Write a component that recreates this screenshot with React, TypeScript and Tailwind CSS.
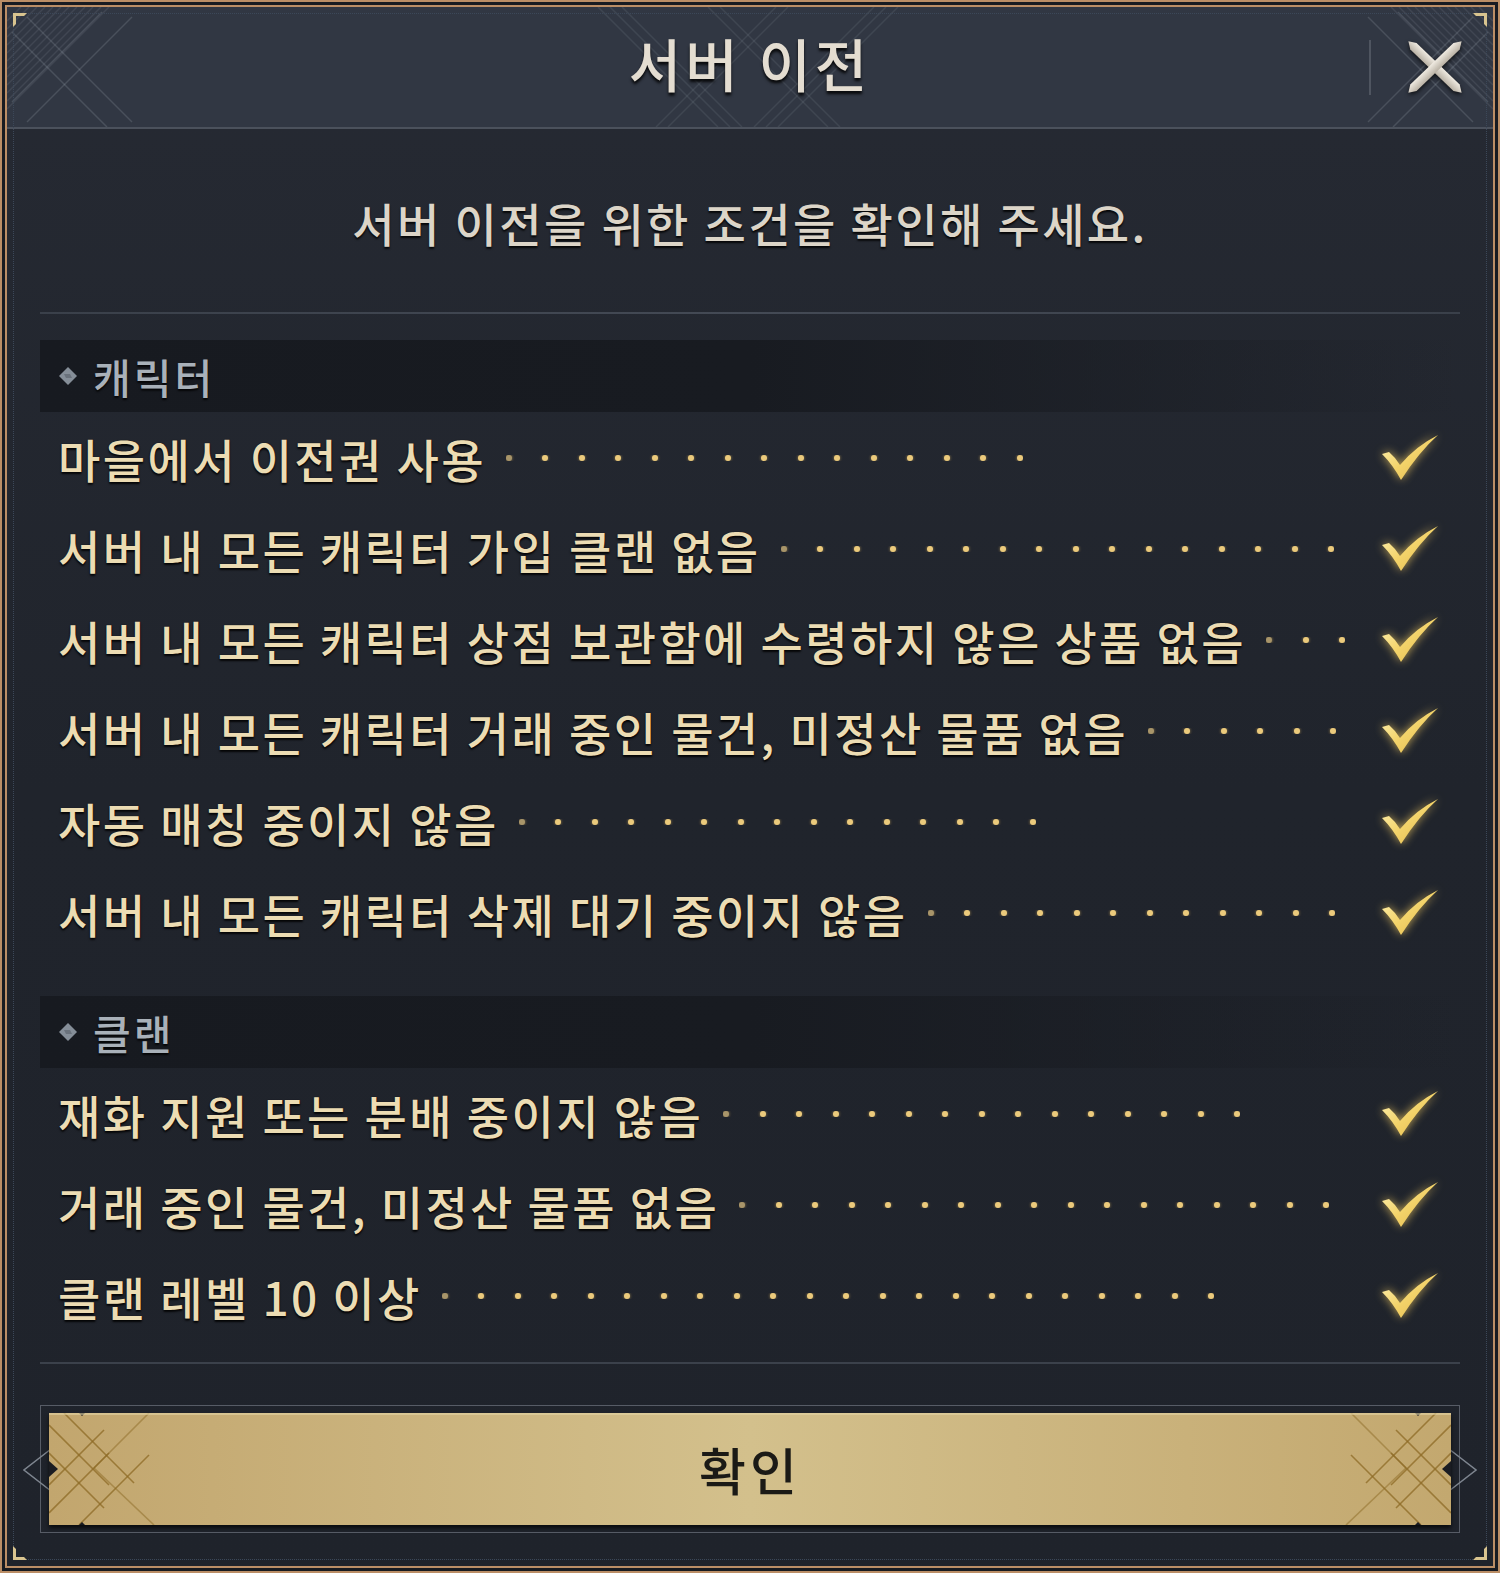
import React from "react";

type Row = { text: string; dots: number };

const charRows: Row[] = [
  { text: "마을에서 이전권 사용", dots: 15 },
  { text: "서버 내 모든 캐릭터 가입 클랜 없음", dots: 16 },
  { text: "서버 내 모든 캐릭터 상점 보관함에 수령하지 않은 상품 없음", dots: 3 },
  { text: "서버 내 모든 캐릭터 거래 중인 물건, 미정산 물품 없음", dots: 6 },
  { text: "자동 매칭 중이지 않음", dots: 15 },
  { text: "서버 내 모든 캐릭터 삭제 대기 중이지 않음", dots: 12 },
];

const clanRows: Row[] = [
  { text: "재화 지원 또는 분배 중이지 않음", dots: 15 },
  { text: "거래 중인 물건, 미정산 물품 없음", dots: 17 },
  { text: "클랜 레벨 10 이상", dots: 22 },
];

const font = { fontFamily: '"Noto Sans CJK KR", "Noto Sans", sans-serif' };

function Check() {
  return (
    <svg width="56" height="45" viewBox="0 0 56 45" className="drop-shadow-[0_0_5px_rgba(255,214,100,0.75)]">
      <defs>
        <linearGradient id="chk" x1="0" y1="0" x2="1" y2="1">
          <stop offset="0" stopColor="#fff4b8" />
          <stop offset="0.5" stopColor="#f3d36a" />
          <stop offset="1" stopColor="#e2b84c" />
        </linearGradient>
      </defs>
      <path d="M0 19 L7 17 Q13 22 18 30 Q34 11 56 0 Q37 17 19 45 Q11 30 0 19 Z" fill="url(#chk)" />
    </svg>
  );
}

function Diamond() {
  return (
    <svg width="20" height="20" viewBox="0 0 20 20">
      <path d="M10 1 L19 10 L10 19 L1 10 Z" fill="#858e98" />
      <path d="M6 8 L12 8 L14 12 L8 12 Z" fill="#6a727c" />
    </svg>
  );
}

function CloseIcon() {
  const blade = "M-37 0 L-30 -4.5 L30 -4.5 L37 0 L30 4.5 L-30 4.5 Z";
  return (
    <svg width="56" height="54" viewBox="0 0 56 54" className="drop-shadow-[0_2px_2px_rgba(0,0,0,0.7)]">
      <defs>
        <linearGradient id="bl" x1="0" y1="0" x2="0" y2="1">
          <stop offset="0" stopColor="#f0ebe2" />
          <stop offset="1" stopColor="#b9b1a4" />
        </linearGradient>
      </defs>
      <g transform="translate(28 27) rotate(44)">
        <path d={blade} fill="url(#bl)" />
      </g>
      <g transform="translate(28 27) rotate(-44)">
        <path d={blade} fill="url(#bl)" />
      </g>
    </svg>
  );
}

function Corner({ className }: { className: string }) {
  return (
    <svg width="14" height="14" viewBox="0 0 14 14" className={className}>
      <path d="M0 0 H14 L11 3 H3 V11 L0 14 Z" fill="#d9c48f" />
    </svg>
  );
}

function HeaderDecor() {
  const hatch = [0, 1, 2, 3, 4, 5, 6, 7, 8, 9, 10, 11];
  const cx = 741;
  return (
    <svg className="absolute inset-0 pointer-events-none" width="1486" height="120" viewBox="0 0 1486 120">
      <g stroke="#9aa5b4" strokeOpacity="0.14" strokeWidth="1.5">
        {hatch.map((i) => (
          <line key={"l" + i} x1={0} y1={14 + i * 8} x2={14 + i * 8} y2={0} />
        ))}
        {hatch.map((i) => (
          <line key={"r" + i} x1={1486} y1={14 + i * 8} x2={1486 - 14 - i * 8} y2={0} />
        ))}
      </g>
      <g stroke="#a8b2bf" strokeOpacity="0.2" strokeWidth="1.5">
        <line x1="20" y1="10" x2="125" y2="115" />
        <line x1="5" y1="25" x2="100" y2="120" />
        <line x1="20" y1="115" x2="125" y2="10" />
        <line x1="5" y1="95" x2="95" y2="5" />
        <line x1="1466" y1="10" x2="1361" y2="115" />
        <line x1="1481" y1="25" x2="1386" y2="120" />
        <line x1="1466" y1="115" x2="1361" y2="10" />
        <line x1="1481" y1="95" x2="1391" y2="5" />
      </g>
      <g stroke="#a8b2bf" strokeOpacity="0.12" strokeWidth="1.5">
        {[0, 12, 24, 110, 122].map((o) => (
          <line key={"a" + o} x1={cx - 150 + o} y1={0} x2={cx - 30 + o} y2={120} />
        ))}
        {[0, 12, 24, 110, 122].map((o) => (
          <line key={"b" + o} x1={cx + 150 - o} y1={0} x2={cx + 30 - o} y2={120} />
        ))}
      </g>
    </svg>
  );
}

function ItemRow({ row }: { row: Row }) {
  return (
    <div className="h-[91px] flex items-center pl-[18px] pr-[22px]">
      <span
        className="text-[46px] font-medium tracking-[2.4px] leading-none text-[#ecdcb3] whitespace-nowrap [text-shadow:0_2px_2px_rgba(0,0,0,0.85),0_0_1px_rgba(0,0,0,0.9)]"
        style={font}
      >
        {row.text}
      </span>
      <div className="ml-[20px] flex gap-[30.5px] overflow-hidden">
        {Array.from({ length: row.dots }).map((_, i) => (
          <span
            key={i}
            className={
              "w-[6px] h-[6px] rounded-full shrink-0 shadow-[0_0_3px_rgba(255,210,110,0.6)] " +
              (i === 0 ? "bg-[#a8956a]" : "bg-[#ebca7c]")
            }
          />
        ))}
      </div>
      <div className="flex-1" />
      <div className="shrink-0">
        <Check />
      </div>
    </div>
  );
}

function SectionBand({ label }: { label: string }) {
  return (
    <div className="h-[72px] flex items-center gap-[15px] pl-[18px] bg-gradient-to-r from-[#171a20] via-[#181b21] to-transparent">
      <Diamond />
      <span
        className="text-[41px] font-medium tracking-[3px] leading-none text-[#a9b1b9] [text-shadow:0_2px_2px_rgba(0,0,0,0.8)]"
        style={font}
      >
        {label}
      </span>
    </div>
  );
}

function ConfirmButton() {
  return (
    <div className="relative border border-[#575c66] px-[8px] py-[7px]">
      <svg className="absolute -left-[18px] top-[42px] pointer-events-none" width="30" height="44" viewBox="0 0 30 44">
        <path d="M28 1 L1 22 L28 43" fill="none" stroke="#7e858f" strokeWidth="1.5" />
      </svg>
      <svg className="absolute -right-[18px] top-[42px] pointer-events-none" width="30" height="44" viewBox="0 0 30 44">
        <path d="M2 1 L29 22 L2 43" fill="none" stroke="#7e858f" strokeWidth="1.5" />
      </svg>
      <div className="relative h-[112px] flex items-center justify-center bg-gradient-to-r from-[#c2a66e] via-[#d3c08c] to-[#c3a86f] shadow-[0_3px_4px_rgba(0,0,0,0.7)]">
        <svg className="absolute inset-0 pointer-events-none" width="1402" height="112" viewBox="0 0 1402 112">
          <g stroke="#8c6a24" strokeOpacity="0.75" strokeWidth="1.6" fill="none">
            <line x1="0" y1="12" x2="60" y2="72" />
            <line x1="0" y1="40" x2="55" y2="95" />
            <line x1="0" y1="100" x2="60" y2="40" />
            <line x1="0" y1="72" x2="55" y2="17" />
            <line x1="15" y1="0" x2="85" y2="70" />
            <line x1="30" y1="112" x2="100" y2="42" />
            <line x1="100" y1="0" x2="45" y2="55" strokeOpacity="0.5" />
            <line x1="45" y1="55" x2="105" y2="112" strokeOpacity="0.5" />
            <line x1="1402" y1="12" x2="1342" y2="72" />
            <line x1="1402" y1="40" x2="1347" y2="95" />
            <line x1="1402" y1="100" x2="1342" y2="40" />
            <line x1="1402" y1="72" x2="1347" y2="17" />
            <line x1="1387" y1="0" x2="1317" y2="70" />
            <line x1="1372" y1="112" x2="1302" y2="42" />
            <line x1="1302" y1="0" x2="1357" y2="55" strokeOpacity="0.5" />
            <line x1="1357" y1="55" x2="1297" y2="112" strokeOpacity="0.5" />
          </g>
          <path d="M0 48 L9 56 L0 64 Z" fill="#1a1c22" />
          <path d="M1402 48 L1393 56 L1402 64 Z" fill="#1a1c22" />
          <path d="M30 0 L36 0 L33 3 Z" fill="#1a1c22" />
          <path d="M30 112 L36 112 L33 109 Z" fill="#1a1c22" />
          <path d="M1366 0 L1372 0 L1369 3 Z" fill="#1a1c22" />
          <path d="M1366 112 L1372 112 L1369 109 Z" fill="#1a1c22" />
          <line x1="0" y1="1" x2="1402" y2="1" stroke="#e2d3a4" strokeOpacity="0.6" strokeWidth="2" />
        </svg>
        <span className="relative text-[51px] font-medium tracking-[4px] leading-none text-[#1b1a16]" style={font}>
          확인
        </span>
      </div>
    </div>
  );
}

export default function App() {
  return (
    <div className="w-[1500px] h-[1573px] border-2 border-[#bb8e66] bg-[#181b21] p-[3px]">
      <div className="relative h-full border-2 border-[#bb8e66] bg-gradient-to-b from-[#262a33] via-[#20242c] to-[#1f232b] flex flex-col">
        <div className="relative h-[120px] shrink-0 bg-[#313743] grid grid-cols-[1fr_auto_1fr] items-center">
          <HeaderDecor />
          <div />
          <h1
            className="relative text-[57px] font-medium tracking-[4px] leading-none text-[#e4ddd1] -mt-[10px] [text-shadow:0_3px_3px_rgba(0,0,0,0.85)]"
            style={font}
          >
            서버 이전
          </h1>
          <div className="relative flex items-center justify-end gap-[36px] pr-[30px]">
            <div className="w-[2px] h-[55px] bg-[#4f5560]" />
            <CloseIcon />
          </div>
        </div>
        <div className="h-[2px] shrink-0 bg-[#4b515c]" />

        <div className="px-[33px] flex flex-col">
          <div className="pt-[63px] pb-[60px] h-[183px] flex justify-center">
            <span
              className="text-[46px] font-medium tracking-[2.4px] leading-[60px] text-[#dcd5c8] [text-shadow:0_2px_2px_rgba(0,0,0,0.85)]"
              style={font}
            >
              서버 이전을 위한 조건을 확인해 주세요.
            </span>
          </div>
          <div className="h-[2px] bg-gradient-to-r from-[#3a404a] via-[#444a55] to-[#3a404a]" />

          <div className="mt-[26px]">
            <SectionBand label="캐릭터" />
          </div>
          {charRows.map((r) => (
            <ItemRow key={r.text} row={r} />
          ))}

          <div className="mt-[38px]">
            <SectionBand label="클랜" />
          </div>
          {clanRows.map((r) => (
            <ItemRow key={r.text} row={r} />
          ))}

          <div className="mt-[21px] h-[2px] bg-[#3b414b]" />

          <div className="mt-[41px]">
            <ConfirmButton />
          </div>
        </div>

        <div className="absolute inset-[6px] border border-dotted border-[#3c4859] pointer-events-none" />
        <Corner className="absolute left-[6px] top-[6px]" />
        <Corner className="absolute right-[6px] top-[6px] -scale-x-100" />
        <Corner className="absolute left-[6px] bottom-[6px] -scale-y-100" />
        <Corner className="absolute right-[6px] bottom-[6px] -scale-100" />
      </div>
    </div>
  );
}
